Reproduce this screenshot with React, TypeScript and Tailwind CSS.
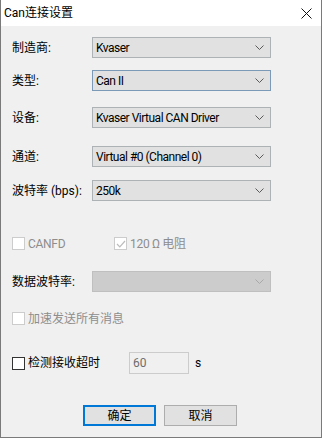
import { useState } from 'react';

const font = { fontFamily: 'Roboto, "Noto Sans CJK SC", sans-serif' };

function Chevron({ disabled }: { disabled?: boolean }) {
  return (
    <svg width="9" height="5" viewBox="0 0 9 5" className="shrink-0">
      <path d="M0.5 0.5 L4.5 4.5 L8.5 0.5" fill="none" stroke={disabled ? '#a8a8a8' : '#5a5a5a'} strokeWidth="1" />
    </svg>
  );
}

function Combo({ value, focused, disabled }: { value?: string; focused?: boolean; disabled?: boolean }) {
  const border = disabled ? 'border-[#bfbfbf] bg-[#cccccc]' : focused ? 'border-[#7a9ab8] bg-[#e1e1e1]' : 'border-[#adb2b5] bg-[#e1e1e1]';
  return (
    <div className={`w-[179px] h-[21px] border ${border} flex items-center justify-between pl-[3px] pr-[6px]`}>
      <span className="text-[12px] tracking-[-0.5px] text-black leading-none">{value}</span>
      <Chevron disabled={disabled} />
    </div>
  );
}

function Row({ label, children, className }: { label: string; children: React.ReactNode; className?: string }) {
  return (
    <div className={`flex items-center ${className ?? ''}`}>
      <div className="w-[80px] text-[12px] text-black">{label}</div>
      {children}
    </div>
  );
}

function Check({ checked, disabled }: { checked?: boolean; disabled?: boolean }) {
  return (
    <div className={`w-[13px] h-[13px] border ${disabled ? 'border-[#cccccc]' : 'border-[#333333]'} bg-white flex items-center justify-center`}>
      {checked && (
        <svg width="10" height="8" viewBox="0 0 10 8">
          <path d="M1 4 L3.8 6.8 L9 1" fill="none" stroke={disabled ? '#bcbcbc' : '#333'} strokeWidth="1.2" />
        </svg>
      )}
    </div>
  );
}

export default function App() {
  const [timeout] = useState('60');
  return (
    <div className="w-[322px] h-[438px] flex flex-col bg-[#f0f0f0] border-l border-r border-b border-[#7a7a7a] select-none" style={font}>
      <div className="h-[26px] bg-white flex items-center justify-between pl-[3px] pr-[9px] shrink-0">
        <span className="text-[12px] text-black">Can连接设置</span>
        <svg width="11" height="11" viewBox="0 0 11 11">
          <path d="M0.5 0.5 L10.5 10.5 M10.5 0.5 L0.5 10.5" stroke="#111" strokeWidth="1" />
        </svg>
      </div>

      <div className="flex flex-col pl-[11px]">
        <Row label="制造商:" className="mt-[11px]">
          <Combo value="Kvaser" />
        </Row>
        <Row label="类型:" className="mt-[12px]">
          <Combo value="Can II" focused />
        </Row>
        <Row label="设备:" className="mt-[16px]">
          <Combo value="Kvaser Virtual CAN Driver" />
        </Row>
        <Row label="通道:" className="mt-[18px]">
          <Combo value="Virtual #0 (Channel 0)" />
        </Row>
        <Row label="波特率 (bps):" className="mt-[13px]">
          <Combo value="250k" />
        </Row>

        <div className="flex items-center mt-[36px] h-[13px]">
          <div className="flex items-center gap-[3px] w-[102px]">
            <Check disabled />
            <span className="text-[12px] tracking-[-0.3px] text-[#8d8d8d]">CANFD</span>
          </div>
          <div className="flex items-center gap-[3px]">
            <Check checked disabled />
            <span className="text-[12px] tracking-[-0.3px] text-[#8d8d8d]">120 Ω 电阻</span>
          </div>
        </div>

        <Row label="数据波特率:" className="mt-[21px]">
          <Combo disabled />
        </Row>

        <div className="flex items-center gap-[3px] mt-[20px] h-[13px]">
          <Check disabled />
          <span className="text-[12px] text-[#8d8d8d]">加速发送所有消息</span>
        </div>

        <div className="flex items-center mt-[27px]">
          <div className="flex items-center gap-[3px] w-[117px]">
            <Check />
            <span className="text-[12px] text-black">检测接收超时</span>
          </div>
          <div className="w-[60px] h-[22px] border border-[#cccccc] bg-[#f0f0f0] flex items-center pl-[3px] text-[12px] text-[#6d6d6d]">
            {timeout}
          </div>
          <span className="ml-[6px] text-[12px] text-black">s</span>
        </div>

        <div className="flex gap-[8px] mt-[31px] pl-[71px]">
          <button className="w-[73px] h-[21px] border-2 border-[#0078d7] bg-[#e1e1e1] text-[12px] text-black flex items-center justify-center">
            确定
          </button>
          <button className="w-[73px] h-[21px] border border-[#adadad] bg-[#e1e1e1] text-[12px] text-black flex items-center justify-center">
            取消
          </button>
        </div>
      </div>
    </div>
  );
}
